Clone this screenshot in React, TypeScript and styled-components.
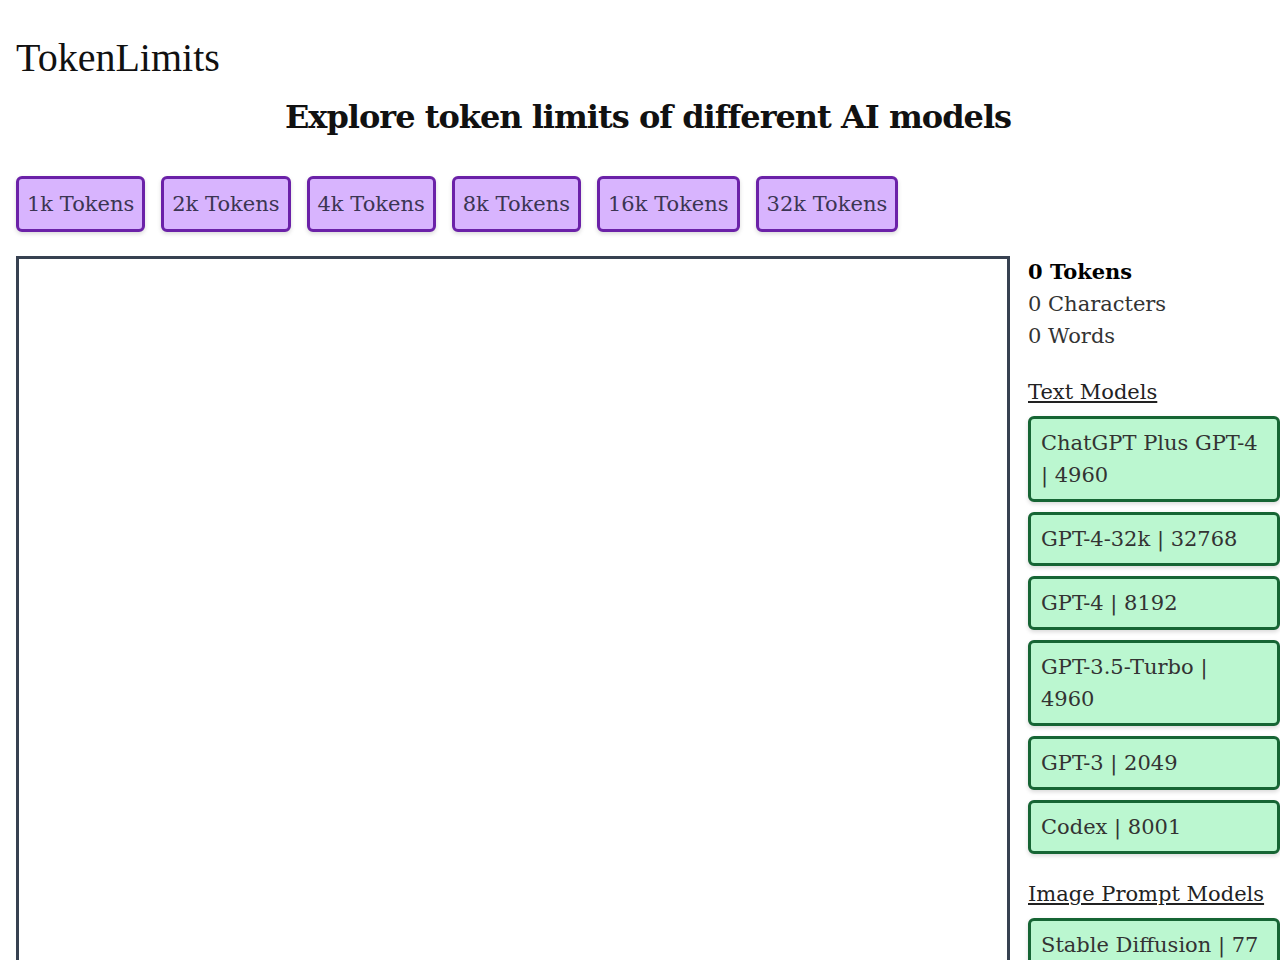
import React from "react";
import styled, { createGlobalStyle } from "styled-components";

const Global = createGlobalStyle`
  html, body { margin: 0; background: #fff; }
  body { font-family: "DejaVu Serif", serif; color: #111; }
`;

const Page = styled.div`padding: 0 0 0 16px;`;
const Brand = styled.div`
  font-family: "Liberation Serif", serif; font-size: 40px; padding-top: 36px; line-height: 44px;
`;
const Headline = styled.h1`
  margin: 16px 0 0; text-align: center; font-size: 32px; font-weight: 700; letter-spacing: -1px; line-height: 42px;
`;
const Presets = styled.div`display: flex; gap: 16px; margin-top: 38px;`;
const Preset = styled.button`
  height: 56px; padding: 0 8px; border: 3px solid #6b21a8; border-radius: 6px;
  background: #d8b4fe; color: #3b3553; font-family: "DejaVu Serif", serif; font-size: 21px; font-weight: 300;
  box-shadow: 0 2px 4px rgba(0,0,0,0.15);
`;
const Main = styled.div`display: flex; gap: 18px; margin-top: 24px; align-items: flex-start;`;
const Area = styled.textarea`
  width: 994px; height: 760px; box-sizing: border-box; border: 3px solid #374151; resize: none; flex: none;
`;
const Side = styled.div`width: 252px; flex: none; font-size: 21px; line-height: 32px; font-weight: 300;`;
const Stat = styled.div<{ $bold?: boolean }>`font-weight: ${p => (p.$bold ? 700 : 300)}; color: ${p => (p.$bold ? "#000" : "#333")};`;
const SectionTitle = styled.div`text-decoration: underline; margin: 24px 0 8px; color: #222;`;
const Model = styled.div`
  border: 3px solid #166534; border-radius: 6px; background: #bbf7d0; padding: 8px 10px;
  margin-bottom: 10px; color: #333; box-shadow: 0 2px 4px rgba(0,0,0,0.15);
`;

const text = ["ChatGPT Plus GPT-4 | 4960", "GPT-4-32k | 32768", "GPT-4 | 8192", "GPT-3.5-Turbo | 4960", "GPT-3 | 2049", "Codex | 8001"];

export default function App() {
  return (
    <Page>
      <Global />
      <Brand>TokenLimits</Brand>
      <Headline>Explore token limits of different AI models</Headline>
      <Presets>
        {["1k", "2k", "4k", "8k", "16k", "32k"].map(k => <Preset key={k}>{k} Tokens</Preset>)}
      </Presets>
      <Main>
        <Area />
        <Side>
          <Stat $bold>0 Tokens</Stat>
          <Stat>0 Characters</Stat>
          <Stat>0 Words</Stat>
          <SectionTitle>Text Models</SectionTitle>
          {text.map(t => <Model key={t}>{t}</Model>)}
          <SectionTitle>Image Prompt Models</SectionTitle>
          <Model>Stable Diffusion | 77</Model>
        </Side>
      </Main>
    </Page>
  );
}
